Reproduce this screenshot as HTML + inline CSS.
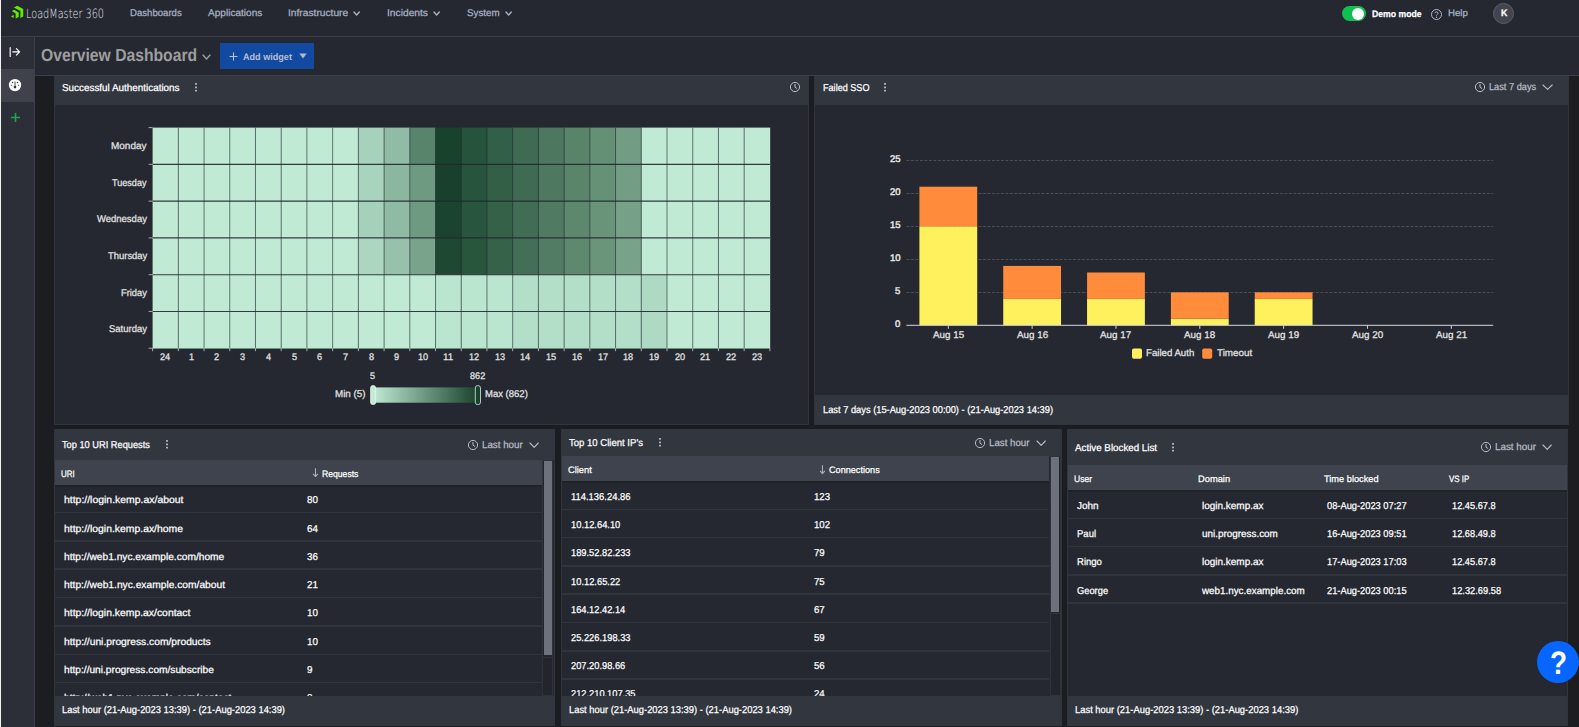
<!DOCTYPE html><html lang="en"><head><meta charset="utf-8"><title>LoadMaster 360 - Overview Dashboard</title>
<style>
html,body{margin:0;padding:0;background:#252831;}
body{width:1579px;height:727px;overflow:hidden;position:relative;font-family:"Liberation Sans", sans-serif;text-rendering:geometricPrecision;}
.b{position:absolute;display:block;}
.t{position:absolute;white-space:nowrap;transform-origin:0 50%;line-height:16px;height:16px;-webkit-text-stroke:0.25px;}
.c{position:absolute;left:0;top:0;width:1579px;overflow:hidden;}
</style></head><body>
<div class="b" style="left:0px;top:0px;width:1579px;height:727px;background:#252831;"></div>
<div class="b" style="left:0px;top:0px;width:1px;height:727px;background:#f2f2f2;"></div>
<div class="b" style="left:1px;top:36px;width:1578px;height:1px;background:#3b3f49;"></div>
<div class="b" style="left:1px;top:37px;width:33px;height:690px;background:#2c2f37;"></div>
<div class="b" style="left:1px;top:69px;width:33px;height:33px;background:#3f424a;"></div>
<div class="b" style="left:34px;top:37px;width:1px;height:690px;background:#3b3f49;"></div>
<div class="b" style="left:35px;top:74.6px;width:1544px;height:1.2px;background:#3b3f49;"></div>
<div class="b" style="left:35px;top:75.8px;width:1544px;height:651.2px;background:#1c1d21;"></div>
<svg class="b" style="left:8px;top:3px" width="18" height="18" viewBox="8 3 18 18">
<path d="M13.9 7.4 L17.2 5.8 L23.2 9.1 L23.2 16.4 L20.4 18.0 L20.4 10.9 Z" fill="#62ec00"/>
<path d="M11.8 11.1 L14.2 9.8 L18.7 12.4 L18.7 16.7 L15.7 18.8 L15.7 13.5 Z" fill="#62ec00"/>
<path d="M13.7 14.7 L11 16.4 L13.7 18 Z" fill="#62ec00"/>
</svg>
<svg class="b" style="left:353.2px;top:10.9px" width="7.3" height="5.0" viewBox="0 0 7.3 5.0"><path d="M1 1 L3.65 4.0 L6.3 1" fill="none" stroke="#a8b2c4" stroke-width="1.4" stroke-linecap="round" stroke-linejoin="round"/></svg>
<svg class="b" style="left:433.3px;top:10.9px" width="7.3" height="5.0" viewBox="0 0 7.3 5.0"><path d="M1 1 L3.65 4.0 L6.3 1" fill="none" stroke="#a8b2c4" stroke-width="1.4" stroke-linecap="round" stroke-linejoin="round"/></svg>
<svg class="b" style="left:504.5px;top:10.9px" width="7.3" height="5.0" viewBox="0 0 7.3 5.0"><path d="M1 1 L3.65 4.0 L6.3 1" fill="none" stroke="#a8b2c4" stroke-width="1.4" stroke-linecap="round" stroke-linejoin="round"/></svg>
<div class="b" style="left:1342px;top:6px;width:24px;height:15px;border-radius:8px;background:#10c050"></div>
<div class="b" style="left:1351.9px;top:7.8px;width:12px;height:12px;border-radius:6px;background:#fff"></div>
<svg class="b" style="left:1429.5px;top:7.5px" width="13" height="13" viewBox="0 0 13 13"><circle cx="6.5" cy="6.5" r="5" fill="none" stroke="#aab6cb" stroke-width="1"/><path d="M4.9 5.2 C4.9 3.4 8.1 3.4 8.1 5.2 C8.1 6.3 6.5 6.3 6.5 7.6" fill="none" stroke="#aab6cb" stroke-width="1"/><circle cx="6.5" cy="9.2" r="0.7" fill="#aab6cb"/></svg>
<div class="b" style="left:1493px;top:3px;width:19.2px;height:19px;border-radius:11px;background:#42454e;border:1px solid #5b5f68"></div>
<svg class="b" style="left:8px;top:45px" width="15" height="14" viewBox="8 45 15 14"><path d="M10.2 47.5 L10.2 56.4 M12.8 51.9 L19.4 51.9 M16.4 48.7 L19.6 51.9 L16.4 55.1" fill="none" stroke="#fff" stroke-width="1.15" stroke-linecap="round" stroke-linejoin="round"/></svg>
<svg class="b" style="left:8px;top:78px" width="14" height="14" viewBox="0 0 14 14"><circle cx="7" cy="7.1" r="6.2" fill="#fff"/><path d="M7 3.4 L7 8" stroke="#85888f" stroke-width="1.5" stroke-linecap="butt"/><circle cx="7" cy="9.1" r="1.35" fill="#2f3239"/><circle cx="3.5" cy="7.2" r="0.75" fill="#6d7078"/><circle cx="10.5" cy="7.2" r="0.75" fill="#6d7078"/><circle cx="4.5" cy="4.6" r="0.75" fill="#3f424a"/><circle cx="9.5" cy="4.6" r="0.75" fill="#3f424a"/></svg>
<svg class="b" style="left:10px;top:112px" width="11" height="11" viewBox="0 0 11 11"><path d="M5.5 1 L5.5 10 M1 5.5 L10 5.5" stroke="#1da44c" stroke-width="1.6" fill="none"/></svg>
<svg class="b" style="left:202px;top:53.5px" width="9" height="6" viewBox="0 0 9 6"><path d="M1 1 L4.5 5 L8 1" fill="none" stroke="#9c9c9c" stroke-width="1.4" stroke-linecap="round" stroke-linejoin="round"/></svg>
<div class="b" style="left:220px;top:43px;width:94px;height:26px;background:#134aa1;"></div>
<svg class="b" style="left:229px;top:52px" width="9" height="9" viewBox="0 0 9 9"><path d="M4.5 0.5 L4.5 8.5 M0.5 4.5 L8.5 4.5" stroke="#b6c0d6" stroke-width="1.1" fill="none"/></svg>
<svg class="b" style="left:298.5px;top:52.5px" width="8" height="6" viewBox="0 0 8 6"><path d="M0.3 0.5 L7.7 0.5 L4 5.6 Z" fill="#b0b8ca"/></svg>
<div class="b" style="left:54px;top:76px;width:755px;height:349px;background:#30343c;"></div>
<div class="b" style="left:55px;top:76px;width:753px;height:348px;background:#252831;"></div>
<div class="b" style="left:55px;top:76px;width:753px;height:29px;background:#32363f;"></div>
<svg class="b" style="left:193.7px;top:81.8px" width="4" height="11" viewBox="0 0 4 11"><rect x="1.1" y="1.0" width="1.8" height="1.8" rx="0.5" fill="#c4c7ce"/><rect x="1.1" y="4.4" width="1.8" height="1.8" rx="0.5" fill="#c4c7ce"/><rect x="1.1" y="7.8" width="1.8" height="1.8" rx="0.5" fill="#c4c7ce"/></svg>
<svg class="b" style="left:788.6px;top:81.3px" width="12" height="12" viewBox="0 0 12 12"><circle cx="6" cy="6" r="4.6" fill="none" stroke="#b7bcc6" stroke-width="1"/><path d="M6 3.3 L6 6.2 L7.8 7.4" fill="none" stroke="#b7bcc6" stroke-width="1" stroke-linecap="round"/></svg>
<div class="b" style="left:814px;top:76px;width:755px;height:349px;background:#30343c;"></div>
<div class="b" style="left:815px;top:76px;width:753px;height:348px;background:#252831;"></div>
<div class="b" style="left:815px;top:76px;width:753px;height:29px;background:#32363f;"></div>
<div class="b" style="left:815px;top:395px;width:753px;height:29px;background:#32363f;"></div>
<svg class="b" style="left:883px;top:81.8px" width="4" height="11" viewBox="0 0 4 11"><rect x="1.1" y="1.0" width="1.8" height="1.8" rx="0.5" fill="#c4c7ce"/><rect x="1.1" y="4.4" width="1.8" height="1.8" rx="0.5" fill="#c4c7ce"/><rect x="1.1" y="7.8" width="1.8" height="1.8" rx="0.5" fill="#c4c7ce"/></svg>
<svg class="b" style="left:1473.8px;top:81.2px" width="12" height="12" viewBox="0 0 12 12"><circle cx="6" cy="6" r="4.6" fill="none" stroke="#b7bcc6" stroke-width="1"/><path d="M6 3.3 L6 6.2 L7.8 7.4" fill="none" stroke="#b7bcc6" stroke-width="1" stroke-linecap="round"/></svg>
<svg class="b" style="left:1542.2px;top:84.2px" width="11.200000000000045" height="7" viewBox="0 0 11.200000000000045 7"><path d="M1 1 L5.600000000000023 5.4 L10.200000000000045 1" fill="none" stroke="#b7bcc6" stroke-width="1.1" stroke-linecap="round" stroke-linejoin="round"/></svg>
<div class="b" style="left:54px;top:429px;width:501px;height:297px;background:#30343c;"></div>
<div class="b" style="left:55px;top:429px;width:499px;height:296px;background:#252831;"></div>
<div class="b" style="left:55px;top:429px;width:499px;height:31px;background:#32363f;"></div>
<div class="b" style="left:55px;top:696px;width:499px;height:29px;background:#32363f;"></div>
<div class="b" style="left:560.6px;top:429px;width:501.4px;height:297px;background:#30343c;"></div>
<div class="b" style="left:561.6px;top:429px;width:499.4px;height:296px;background:#252831;"></div>
<div class="b" style="left:561.6px;top:429px;width:499.4px;height:27px;background:#32363f;"></div>
<div class="b" style="left:561.6px;top:696px;width:499.4px;height:29px;background:#32363f;"></div>
<div class="b" style="left:1067px;top:429px;width:501px;height:297px;background:#30343c;"></div>
<div class="b" style="left:1068px;top:429px;width:499px;height:296px;background:#252831;"></div>
<div class="b" style="left:1068px;top:429px;width:499px;height:36px;background:#32363f;"></div>
<div class="b" style="left:1068px;top:696px;width:499px;height:29px;background:#32363f;"></div>
<svg class="b" style="left:164.7px;top:439.3px" width="4" height="11" viewBox="0 0 4 11"><rect x="1.1" y="1.0" width="1.8" height="1.8" rx="0.5" fill="#c4c7ce"/><rect x="1.1" y="4.4" width="1.8" height="1.8" rx="0.5" fill="#c4c7ce"/><rect x="1.1" y="7.8" width="1.8" height="1.8" rx="0.5" fill="#c4c7ce"/></svg>
<svg class="b" style="left:467.3px;top:438.8px" width="12" height="12" viewBox="0 0 12 12"><circle cx="6" cy="6" r="4.6" fill="none" stroke="#b7bcc6" stroke-width="1"/><path d="M6 3.3 L6 6.2 L7.8 7.4" fill="none" stroke="#b7bcc6" stroke-width="1" stroke-linecap="round"/></svg>
<svg class="b" style="left:529px;top:441.8px" width="10.299999999999955" height="7" viewBox="0 0 10.299999999999955 7"><path d="M1 1 L5.149999999999977 5.4 L9.299999999999955 1" fill="none" stroke="#b7bcc6" stroke-width="1.1" stroke-linecap="round" stroke-linejoin="round"/></svg>
<svg class="b" style="left:657.7px;top:437.3px" width="4" height="11" viewBox="0 0 4 11"><rect x="1.1" y="1.0" width="1.8" height="1.8" rx="0.5" fill="#c4c7ce"/><rect x="1.1" y="4.4" width="1.8" height="1.8" rx="0.5" fill="#c4c7ce"/><rect x="1.1" y="7.8" width="1.8" height="1.8" rx="0.5" fill="#c4c7ce"/></svg>
<svg class="b" style="left:974.1px;top:436.8px" width="12" height="12" viewBox="0 0 12 12"><circle cx="6" cy="6" r="4.6" fill="none" stroke="#b7bcc6" stroke-width="1"/><path d="M6 3.3 L6 6.2 L7.8 7.4" fill="none" stroke="#b7bcc6" stroke-width="1" stroke-linecap="round"/></svg>
<svg class="b" style="left:1035.6px;top:439.8px" width="10.400000000000091" height="7" viewBox="0 0 10.400000000000091 7"><path d="M1 1 L5.2000000000000455 5.4 L9.400000000000091 1" fill="none" stroke="#b7bcc6" stroke-width="1.1" stroke-linecap="round" stroke-linejoin="round"/></svg>
<svg class="b" style="left:1170.7px;top:441.9px" width="4" height="11" viewBox="0 0 4 11"><rect x="1.1" y="1.0" width="1.8" height="1.8" rx="0.5" fill="#c4c7ce"/><rect x="1.1" y="4.4" width="1.8" height="1.8" rx="0.5" fill="#c4c7ce"/><rect x="1.1" y="7.8" width="1.8" height="1.8" rx="0.5" fill="#c4c7ce"/></svg>
<svg class="b" style="left:1480.3px;top:440.7px" width="12" height="12" viewBox="0 0 12 12"><circle cx="6" cy="6" r="4.6" fill="none" stroke="#b7bcc6" stroke-width="1"/><path d="M6 3.3 L6 6.2 L7.8 7.4" fill="none" stroke="#b7bcc6" stroke-width="1" stroke-linecap="round"/></svg>
<svg class="b" style="left:1542.2px;top:443.7px" width="10.299999999999955" height="7" viewBox="0 0 10.299999999999955 7"><path d="M1 1 L5.149999999999977 5.4 L9.299999999999955 1" fill="none" stroke="#b7bcc6" stroke-width="1.1" stroke-linecap="round" stroke-linejoin="round"/></svg>
<div class="b" style="left:55px;top:460px;width:487px;height:25.19999999999999px;background:#3e434d;"></div>
<div class="b" style="left:55px;top:485.2px;width:487px;height:1.6px;background:#202229;"></div>
<div class="b" style="left:55px;top:511.7px;width:487px;height:1.6px;background:#30343c;"></div>
<div class="b" style="left:55px;top:540.1px;width:487px;height:1.6px;background:#30343c;"></div>
<div class="b" style="left:55px;top:568.4000000000001px;width:487px;height:1.6px;background:#30343c;"></div>
<div class="b" style="left:55px;top:596.8000000000001px;width:487px;height:1.6px;background:#30343c;"></div>
<div class="b" style="left:55px;top:625.1px;width:487px;height:1.6px;background:#30343c;"></div>
<div class="b" style="left:55px;top:653.5px;width:487px;height:1.6px;background:#30343c;"></div>
<div class="b" style="left:55px;top:681.8000000000001px;width:487px;height:1.6px;background:#30343c;"></div>
<div class="b" style="left:542.4px;top:460px;width:11.100000000000023px;height:236px;background:#23252c;box-shadow:inset 0 0 0 1px #2f323a;"></div>
<div class="b" style="left:543.9px;top:461.4px;width:8.100000000000023px;height:194.10000000000002px;background:#6c717c;"></div>
<div class="b" style="left:542.4px;top:657.0px;width:11.100000000000023px;height:1px;background:#30333b;"></div>
<svg class="b" style="left:311.8px;top:467.8px" width="7" height="10" viewBox="0 0 7 10"><path d="M3.5 0.3 L3.5 8.4 M1.1 5.9 L3.5 8.6 L5.9 5.9" fill="none" stroke="#a9aebb" stroke-width="1.1" stroke-linejoin="round"/></svg>
<div class="b" style="left:561.6px;top:456px;width:487.69999999999993px;height:25px;background:#3e434d;"></div>
<div class="b" style="left:561.6px;top:481px;width:487.69999999999993px;height:1.6px;background:#202229;"></div>
<div class="b" style="left:561.6px;top:508.5px;width:487.69999999999993px;height:1.6px;background:#30343c;"></div>
<div class="b" style="left:561.6px;top:536.8000000000001px;width:487.69999999999993px;height:1.6px;background:#30343c;"></div>
<div class="b" style="left:561.6px;top:565.1px;width:487.69999999999993px;height:1.6px;background:#30343c;"></div>
<div class="b" style="left:561.6px;top:593.4000000000001px;width:487.69999999999993px;height:1.6px;background:#30343c;"></div>
<div class="b" style="left:561.6px;top:621.7px;width:487.69999999999993px;height:1.6px;background:#30343c;"></div>
<div class="b" style="left:561.6px;top:650.0px;width:487.69999999999993px;height:1.6px;background:#30343c;"></div>
<div class="b" style="left:561.6px;top:678.3000000000001px;width:487.69999999999993px;height:1.6px;background:#30343c;"></div>
<div class="b" style="left:1049.6px;top:456px;width:11.100000000000136px;height:240px;background:#23252c;box-shadow:inset 0 0 0 1px #2f323a;"></div>
<div class="b" style="left:1051.1px;top:457.4px;width:8.100000000000136px;height:154.30000000000007px;background:#6c717c;"></div>
<div class="b" style="left:1049.6px;top:613.2px;width:11.100000000000136px;height:1px;background:#30333b;"></div>
<svg class="b" style="left:818.5px;top:464.6px" width="7" height="10" viewBox="0 0 7 10"><path d="M3.5 0.3 L3.5 8.4 M1.1 5.9 L3.5 8.6 L5.9 5.9" fill="none" stroke="#a9aebb" stroke-width="1.1" stroke-linejoin="round"/></svg>
<div class="b" style="left:1068px;top:465px;width:499px;height:25px;background:#3e434d;"></div>
<div class="b" style="left:1068px;top:490px;width:499px;height:1.6px;background:#202229;"></div>
<div class="b" style="left:1068px;top:517.5px;width:499px;height:1.6px;background:#30343c;"></div>
<div class="b" style="left:1068px;top:545.8000000000001px;width:499px;height:1.6px;background:#30343c;"></div>
<div class="b" style="left:1068px;top:574.0px;width:499px;height:1.6px;background:#30343c;"></div>
<div class="b" style="left:1068px;top:602.2px;width:499px;height:1.6px;background:#30343c;"></div>
<div class="b" style="left:1537px;top:640.6px;width:42px;height:42px;border-radius:21px;background:#0666ff"></div>
<svg class="b" style="left:0;top:0" width="1579" height="440" viewBox="0 0 1579 440"><rect x="152.60" y="127.60" width="26.02" height="37.07" fill="#c0ead3"/><rect x="178.32" y="127.60" width="26.02" height="37.07" fill="#c0ead3"/><rect x="204.04" y="127.60" width="26.02" height="37.07" fill="#c0ead3"/><rect x="229.76" y="127.60" width="26.02" height="37.07" fill="#c0ead3"/><rect x="255.48" y="127.60" width="26.02" height="37.07" fill="#c0ead3"/><rect x="281.20" y="127.60" width="26.02" height="37.07" fill="#c0ead3"/><rect x="306.92" y="127.60" width="26.02" height="37.07" fill="#c0ead3"/><rect x="332.64" y="127.60" width="26.02" height="37.07" fill="#c0ead3"/><rect x="358.36" y="127.60" width="26.02" height="37.07" fill="#a6d1ba"/><rect x="384.08" y="127.60" width="26.02" height="37.07" fill="#90bba4"/><rect x="409.80" y="127.60" width="26.02" height="37.07" fill="#58846b"/><rect x="435.52" y="127.60" width="26.02" height="37.07" fill="#19422d"/><rect x="461.24" y="127.60" width="26.02" height="37.07" fill="#25533b"/><rect x="486.96" y="127.60" width="26.02" height="37.07" fill="#325f47"/><rect x="512.68" y="127.60" width="26.02" height="37.07" fill="#3f6b52"/><rect x="538.40" y="127.60" width="26.02" height="37.07" fill="#4d785f"/><rect x="564.12" y="127.60" width="26.02" height="37.07" fill="#59846a"/><rect x="589.84" y="127.60" width="26.02" height="37.07" fill="#649075"/><rect x="615.56" y="127.60" width="26.02" height="37.07" fill="#729d84"/><rect x="641.28" y="127.60" width="26.02" height="37.07" fill="#c0ead3"/><rect x="667.00" y="127.60" width="26.02" height="37.07" fill="#c0ead3"/><rect x="692.72" y="127.60" width="26.02" height="37.07" fill="#c0ead3"/><rect x="718.44" y="127.60" width="26.02" height="37.07" fill="#c0ead3"/><rect x="744.16" y="127.60" width="26.02" height="37.07" fill="#c0ead3"/><rect x="152.60" y="164.37" width="26.02" height="37.07" fill="#c0ead3"/><rect x="178.32" y="164.37" width="26.02" height="37.07" fill="#c0ead3"/><rect x="204.04" y="164.37" width="26.02" height="37.07" fill="#c0ead3"/><rect x="229.76" y="164.37" width="26.02" height="37.07" fill="#c0ead3"/><rect x="255.48" y="164.37" width="26.02" height="37.07" fill="#c0ead3"/><rect x="281.20" y="164.37" width="26.02" height="37.07" fill="#c0ead3"/><rect x="306.92" y="164.37" width="26.02" height="37.07" fill="#c0ead3"/><rect x="332.64" y="164.37" width="26.02" height="37.07" fill="#c0ead3"/><rect x="358.36" y="164.37" width="26.02" height="37.07" fill="#a8d3bc"/><rect x="384.08" y="164.37" width="26.02" height="37.07" fill="#8cb79f"/><rect x="409.80" y="164.37" width="26.02" height="37.07" fill="#6f9a82"/><rect x="435.52" y="164.37" width="26.02" height="37.07" fill="#18402c"/><rect x="461.24" y="164.37" width="26.02" height="37.07" fill="#26543c"/><rect x="486.96" y="164.37" width="26.02" height="37.07" fill="#335f47"/><rect x="512.68" y="164.37" width="26.02" height="37.07" fill="#3f6b52"/><rect x="538.40" y="164.37" width="26.02" height="37.07" fill="#4e7960"/><rect x="564.12" y="164.37" width="26.02" height="37.07" fill="#5a856b"/><rect x="589.84" y="164.37" width="26.02" height="37.07" fill="#659176"/><rect x="615.56" y="164.37" width="26.02" height="37.07" fill="#739e85"/><rect x="641.28" y="164.37" width="26.02" height="37.07" fill="#c0ead3"/><rect x="667.00" y="164.37" width="26.02" height="37.07" fill="#c0ead3"/><rect x="692.72" y="164.37" width="26.02" height="37.07" fill="#c0ead3"/><rect x="718.44" y="164.37" width="26.02" height="37.07" fill="#c0ead3"/><rect x="744.16" y="164.37" width="26.02" height="37.07" fill="#c0ead3"/><rect x="152.60" y="201.14" width="26.02" height="37.07" fill="#c0ead3"/><rect x="178.32" y="201.14" width="26.02" height="37.07" fill="#c0ead3"/><rect x="204.04" y="201.14" width="26.02" height="37.07" fill="#c0ead3"/><rect x="229.76" y="201.14" width="26.02" height="37.07" fill="#c0ead3"/><rect x="255.48" y="201.14" width="26.02" height="37.07" fill="#c0ead3"/><rect x="281.20" y="201.14" width="26.02" height="37.07" fill="#c0ead3"/><rect x="306.92" y="201.14" width="26.02" height="37.07" fill="#c0ead3"/><rect x="332.64" y="201.14" width="26.02" height="37.07" fill="#c0ead3"/><rect x="358.36" y="201.14" width="26.02" height="37.07" fill="#a5d0b9"/><rect x="384.08" y="201.14" width="26.02" height="37.07" fill="#8fbaa3"/><rect x="409.80" y="201.14" width="26.02" height="37.07" fill="#6f9a82"/><rect x="435.52" y="201.14" width="26.02" height="37.07" fill="#1a442f"/><rect x="461.24" y="201.14" width="26.02" height="37.07" fill="#27553d"/><rect x="486.96" y="201.14" width="26.02" height="37.07" fill="#346148"/><rect x="512.68" y="201.14" width="26.02" height="37.07" fill="#416d54"/><rect x="538.40" y="201.14" width="26.02" height="37.07" fill="#507b62"/><rect x="564.12" y="201.14" width="26.02" height="37.07" fill="#5d886e"/><rect x="589.84" y="201.14" width="26.02" height="37.07" fill="#69947a"/><rect x="615.56" y="201.14" width="26.02" height="37.07" fill="#76a188"/><rect x="641.28" y="201.14" width="26.02" height="37.07" fill="#c0ead3"/><rect x="667.00" y="201.14" width="26.02" height="37.07" fill="#c0ead3"/><rect x="692.72" y="201.14" width="26.02" height="37.07" fill="#c0ead3"/><rect x="718.44" y="201.14" width="26.02" height="37.07" fill="#c0ead3"/><rect x="744.16" y="201.14" width="26.02" height="37.07" fill="#c0ead3"/><rect x="152.60" y="237.91" width="26.02" height="37.07" fill="#c0ead3"/><rect x="178.32" y="237.91" width="26.02" height="37.07" fill="#c0ead3"/><rect x="204.04" y="237.91" width="26.02" height="37.07" fill="#c0ead3"/><rect x="229.76" y="237.91" width="26.02" height="37.07" fill="#c0ead3"/><rect x="255.48" y="237.91" width="26.02" height="37.07" fill="#c0ead3"/><rect x="281.20" y="237.91" width="26.02" height="37.07" fill="#c0ead3"/><rect x="306.92" y="237.91" width="26.02" height="37.07" fill="#c0ead3"/><rect x="332.64" y="237.91" width="26.02" height="37.07" fill="#c0ead3"/><rect x="358.36" y="237.91" width="26.02" height="37.07" fill="#acd6bf"/><rect x="384.08" y="237.91" width="26.02" height="37.07" fill="#97c1aa"/><rect x="409.80" y="237.91" width="26.02" height="37.07" fill="#79a38b"/><rect x="435.52" y="237.91" width="26.02" height="37.07" fill="#1e4831"/><rect x="461.24" y="237.91" width="26.02" height="37.07" fill="#28563d"/><rect x="486.96" y="237.91" width="26.02" height="37.07" fill="#356249"/><rect x="512.68" y="237.91" width="26.02" height="37.07" fill="#436f56"/><rect x="538.40" y="237.91" width="26.02" height="37.07" fill="#527d64"/><rect x="564.12" y="237.91" width="26.02" height="37.07" fill="#5e896f"/><rect x="589.84" y="237.91" width="26.02" height="37.07" fill="#6a957b"/><rect x="615.56" y="237.91" width="26.02" height="37.07" fill="#78a38a"/><rect x="641.28" y="237.91" width="26.02" height="37.07" fill="#c0ead3"/><rect x="667.00" y="237.91" width="26.02" height="37.07" fill="#c0ead3"/><rect x="692.72" y="237.91" width="26.02" height="37.07" fill="#c0ead3"/><rect x="718.44" y="237.91" width="26.02" height="37.07" fill="#c0ead3"/><rect x="744.16" y="237.91" width="26.02" height="37.07" fill="#c0ead3"/><rect x="152.60" y="274.68" width="26.02" height="37.07" fill="#c0ead3"/><rect x="178.32" y="274.68" width="26.02" height="37.07" fill="#c0ead3"/><rect x="204.04" y="274.68" width="26.02" height="37.07" fill="#c0ead3"/><rect x="229.76" y="274.68" width="26.02" height="37.07" fill="#c0ead3"/><rect x="255.48" y="274.68" width="26.02" height="37.07" fill="#c0ead3"/><rect x="281.20" y="274.68" width="26.02" height="37.07" fill="#c0ead3"/><rect x="306.92" y="274.68" width="26.02" height="37.07" fill="#c0ead3"/><rect x="332.64" y="274.68" width="26.02" height="37.07" fill="#c0ead3"/><rect x="358.36" y="274.68" width="26.02" height="37.07" fill="#c0ead3"/><rect x="384.08" y="274.68" width="26.02" height="37.07" fill="#c0ead3"/><rect x="409.80" y="274.68" width="26.02" height="37.07" fill="#c0ead3"/><rect x="435.52" y="274.68" width="26.02" height="37.07" fill="#bae5ce"/><rect x="461.24" y="274.68" width="26.02" height="37.07" fill="#bae5ce"/><rect x="486.96" y="274.68" width="26.02" height="37.07" fill="#bae5ce"/><rect x="512.68" y="274.68" width="26.02" height="37.07" fill="#b3dec7"/><rect x="538.40" y="274.68" width="26.02" height="37.07" fill="#b3dec7"/><rect x="564.12" y="274.68" width="26.02" height="37.07" fill="#b3dec7"/><rect x="589.84" y="274.68" width="26.02" height="37.07" fill="#b3dec7"/><rect x="615.56" y="274.68" width="26.02" height="37.07" fill="#b3dec7"/><rect x="641.28" y="274.68" width="26.02" height="37.07" fill="#aed9c2"/><rect x="667.00" y="274.68" width="26.02" height="37.07" fill="#c0ead3"/><rect x="692.72" y="274.68" width="26.02" height="37.07" fill="#c0ead3"/><rect x="718.44" y="274.68" width="26.02" height="37.07" fill="#c0ead3"/><rect x="744.16" y="274.68" width="26.02" height="37.07" fill="#c0ead3"/><rect x="152.60" y="311.45" width="26.02" height="37.07" fill="#c0ead3"/><rect x="178.32" y="311.45" width="26.02" height="37.07" fill="#c0ead3"/><rect x="204.04" y="311.45" width="26.02" height="37.07" fill="#c0ead3"/><rect x="229.76" y="311.45" width="26.02" height="37.07" fill="#c0ead3"/><rect x="255.48" y="311.45" width="26.02" height="37.07" fill="#c0ead3"/><rect x="281.20" y="311.45" width="26.02" height="37.07" fill="#c0ead3"/><rect x="306.92" y="311.45" width="26.02" height="37.07" fill="#c0ead3"/><rect x="332.64" y="311.45" width="26.02" height="37.07" fill="#c0ead3"/><rect x="358.36" y="311.45" width="26.02" height="37.07" fill="#c0ead3"/><rect x="384.08" y="311.45" width="26.02" height="37.07" fill="#c0ead3"/><rect x="409.80" y="311.45" width="26.02" height="37.07" fill="#c0ead3"/><rect x="435.52" y="311.45" width="26.02" height="37.07" fill="#bae5ce"/><rect x="461.24" y="311.45" width="26.02" height="37.07" fill="#bae5ce"/><rect x="486.96" y="311.45" width="26.02" height="37.07" fill="#bae5ce"/><rect x="512.68" y="311.45" width="26.02" height="37.07" fill="#b3dec7"/><rect x="538.40" y="311.45" width="26.02" height="37.07" fill="#b3dec7"/><rect x="564.12" y="311.45" width="26.02" height="37.07" fill="#b3dec7"/><rect x="589.84" y="311.45" width="26.02" height="37.07" fill="#b3dec7"/><rect x="615.56" y="311.45" width="26.02" height="37.07" fill="#b3dec7"/><rect x="641.28" y="311.45" width="26.02" height="37.07" fill="#aed9c2"/><rect x="667.00" y="311.45" width="26.02" height="37.07" fill="#c0ead3"/><rect x="692.72" y="311.45" width="26.02" height="37.07" fill="#c0ead3"/><rect x="718.44" y="311.45" width="26.02" height="37.07" fill="#c0ead3"/><rect x="744.16" y="311.45" width="26.02" height="37.07" fill="#c0ead3"/><line x1="178.32" y1="127.6" x2="178.32" y2="348.22" stroke="#252831" stroke-width="1" stroke-opacity="0.6"/><line x1="204.04" y1="127.6" x2="204.04" y2="348.22" stroke="#252831" stroke-width="1" stroke-opacity="0.6"/><line x1="229.76" y1="127.6" x2="229.76" y2="348.22" stroke="#252831" stroke-width="1" stroke-opacity="0.6"/><line x1="255.48" y1="127.6" x2="255.48" y2="348.22" stroke="#252831" stroke-width="1" stroke-opacity="0.6"/><line x1="281.20" y1="127.6" x2="281.20" y2="348.22" stroke="#252831" stroke-width="1" stroke-opacity="0.6"/><line x1="306.92" y1="127.6" x2="306.92" y2="348.22" stroke="#252831" stroke-width="1" stroke-opacity="0.6"/><line x1="332.64" y1="127.6" x2="332.64" y2="348.22" stroke="#252831" stroke-width="1" stroke-opacity="0.6"/><line x1="358.36" y1="127.6" x2="358.36" y2="348.22" stroke="#252831" stroke-width="1" stroke-opacity="0.6"/><line x1="384.08" y1="127.6" x2="384.08" y2="348.22" stroke="#252831" stroke-width="1" stroke-opacity="0.6"/><line x1="409.80" y1="127.6" x2="409.80" y2="348.22" stroke="#252831" stroke-width="1" stroke-opacity="0.6"/><line x1="435.52" y1="127.6" x2="435.52" y2="348.22" stroke="#252831" stroke-width="1" stroke-opacity="0.6"/><line x1="461.24" y1="127.6" x2="461.24" y2="348.22" stroke="#252831" stroke-width="1" stroke-opacity="0.6"/><line x1="486.96" y1="127.6" x2="486.96" y2="348.22" stroke="#252831" stroke-width="1" stroke-opacity="0.6"/><line x1="512.68" y1="127.6" x2="512.68" y2="348.22" stroke="#252831" stroke-width="1" stroke-opacity="0.6"/><line x1="538.40" y1="127.6" x2="538.40" y2="348.22" stroke="#252831" stroke-width="1" stroke-opacity="0.6"/><line x1="564.12" y1="127.6" x2="564.12" y2="348.22" stroke="#252831" stroke-width="1" stroke-opacity="0.6"/><line x1="589.84" y1="127.6" x2="589.84" y2="348.22" stroke="#252831" stroke-width="1" stroke-opacity="0.6"/><line x1="615.56" y1="127.6" x2="615.56" y2="348.22" stroke="#252831" stroke-width="1" stroke-opacity="0.6"/><line x1="641.28" y1="127.6" x2="641.28" y2="348.22" stroke="#252831" stroke-width="1" stroke-opacity="0.6"/><line x1="667.00" y1="127.6" x2="667.00" y2="348.22" stroke="#252831" stroke-width="1" stroke-opacity="0.6"/><line x1="692.72" y1="127.6" x2="692.72" y2="348.22" stroke="#252831" stroke-width="1" stroke-opacity="0.6"/><line x1="718.44" y1="127.6" x2="718.44" y2="348.22" stroke="#252831" stroke-width="1" stroke-opacity="0.6"/><line x1="744.16" y1="127.6" x2="744.16" y2="348.22" stroke="#252831" stroke-width="1" stroke-opacity="0.6"/><line x1="152.6" y1="164.37" x2="769.88" y2="164.37" stroke="#252831" stroke-width="1.1" stroke-opacity="0.9"/><line x1="152.6" y1="201.14" x2="769.88" y2="201.14" stroke="#252831" stroke-width="1.1" stroke-opacity="0.9"/><line x1="152.6" y1="237.91" x2="769.88" y2="237.91" stroke="#252831" stroke-width="1.1" stroke-opacity="0.9"/><line x1="152.6" y1="274.68" x2="769.88" y2="274.68" stroke="#252831" stroke-width="1.1" stroke-opacity="0.9"/><line x1="152.6" y1="311.45" x2="769.88" y2="311.45" stroke="#252831" stroke-width="1.1" stroke-opacity="0.9"/><line x1="148.6" y1="127.60" x2="152.6" y2="127.60" stroke="#c9ccd3" stroke-width="0.8"/><line x1="148.6" y1="164.37" x2="152.6" y2="164.37" stroke="#c9ccd3" stroke-width="0.8"/><line x1="148.6" y1="201.14" x2="152.6" y2="201.14" stroke="#c9ccd3" stroke-width="0.8"/><line x1="148.6" y1="237.91" x2="152.6" y2="237.91" stroke="#c9ccd3" stroke-width="0.8"/><line x1="148.6" y1="274.68" x2="152.6" y2="274.68" stroke="#c9ccd3" stroke-width="0.8"/><line x1="148.6" y1="311.45" x2="152.6" y2="311.45" stroke="#c9ccd3" stroke-width="0.8"/><line x1="148.6" y1="348.22" x2="152.6" y2="348.22" stroke="#c9ccd3" stroke-width="0.8"/><line x1="152.60" y1="348.22" x2="152.60" y2="351.22" stroke="#c9ccd3" stroke-width="0.8"/><line x1="178.32" y1="348.22" x2="178.32" y2="351.22" stroke="#c9ccd3" stroke-width="0.8"/><line x1="204.04" y1="348.22" x2="204.04" y2="351.22" stroke="#c9ccd3" stroke-width="0.8"/><line x1="229.76" y1="348.22" x2="229.76" y2="351.22" stroke="#c9ccd3" stroke-width="0.8"/><line x1="255.48" y1="348.22" x2="255.48" y2="351.22" stroke="#c9ccd3" stroke-width="0.8"/><line x1="281.20" y1="348.22" x2="281.20" y2="351.22" stroke="#c9ccd3" stroke-width="0.8"/><line x1="306.92" y1="348.22" x2="306.92" y2="351.22" stroke="#c9ccd3" stroke-width="0.8"/><line x1="332.64" y1="348.22" x2="332.64" y2="351.22" stroke="#c9ccd3" stroke-width="0.8"/><line x1="358.36" y1="348.22" x2="358.36" y2="351.22" stroke="#c9ccd3" stroke-width="0.8"/><line x1="384.08" y1="348.22" x2="384.08" y2="351.22" stroke="#c9ccd3" stroke-width="0.8"/><line x1="409.80" y1="348.22" x2="409.80" y2="351.22" stroke="#c9ccd3" stroke-width="0.8"/><line x1="435.52" y1="348.22" x2="435.52" y2="351.22" stroke="#c9ccd3" stroke-width="0.8"/><line x1="461.24" y1="348.22" x2="461.24" y2="351.22" stroke="#c9ccd3" stroke-width="0.8"/><line x1="486.96" y1="348.22" x2="486.96" y2="351.22" stroke="#c9ccd3" stroke-width="0.8"/><line x1="512.68" y1="348.22" x2="512.68" y2="351.22" stroke="#c9ccd3" stroke-width="0.8"/><line x1="538.40" y1="348.22" x2="538.40" y2="351.22" stroke="#c9ccd3" stroke-width="0.8"/><line x1="564.12" y1="348.22" x2="564.12" y2="351.22" stroke="#c9ccd3" stroke-width="0.8"/><line x1="589.84" y1="348.22" x2="589.84" y2="351.22" stroke="#c9ccd3" stroke-width="0.8"/><line x1="615.56" y1="348.22" x2="615.56" y2="351.22" stroke="#c9ccd3" stroke-width="0.8"/><line x1="641.28" y1="348.22" x2="641.28" y2="351.22" stroke="#c9ccd3" stroke-width="0.8"/><line x1="667.00" y1="348.22" x2="667.00" y2="351.22" stroke="#c9ccd3" stroke-width="0.8"/><line x1="692.72" y1="348.22" x2="692.72" y2="351.22" stroke="#c9ccd3" stroke-width="0.8"/><line x1="718.44" y1="348.22" x2="718.44" y2="351.22" stroke="#c9ccd3" stroke-width="0.8"/><line x1="744.16" y1="348.22" x2="744.16" y2="351.22" stroke="#c9ccd3" stroke-width="0.8"/><line x1="769.88" y1="348.22" x2="769.88" y2="351.22" stroke="#c9ccd3" stroke-width="0.8"/><defs><linearGradient id="lg" x1="0" x2="1" y1="0" y2="0"><stop offset="0" stop-color="#c0ead3"/><stop offset="1" stop-color="#19422d"/></linearGradient></defs><rect x="373" y="387.4" width="105" height="15.3" fill="url(#lg)"/><rect x="370.6" y="385.6" width="5" height="19" rx="2.3" fill="#c3ebd6" stroke="#e6f5ec" stroke-width="0.8"/><rect x="475.3" y="385.6" width="5.2" height="19" rx="2.3" fill="#19422d" stroke="#c9d9d0" stroke-width="0.9"/></svg>
<svg class="b" style="left:0;top:0" width="1579" height="440" viewBox="0 0 1579 440"><line x1="906.4" y1="292.5" x2="1493.2" y2="292.5" stroke="#4a4e57" stroke-width="1" stroke-dasharray="3 1.5"/><line x1="906.4" y1="259.5" x2="1493.2" y2="259.5" stroke="#4a4e57" stroke-width="1" stroke-dasharray="3 1.5"/><line x1="906.4" y1="226.5" x2="1493.2" y2="226.5" stroke="#4a4e57" stroke-width="1" stroke-dasharray="3 1.5"/><line x1="906.4" y1="193.5" x2="1493.2" y2="193.5" stroke="#4a4e57" stroke-width="1" stroke-dasharray="3 1.5"/><line x1="906.4" y1="160.5" x2="1493.2" y2="160.5" stroke="#4a4e57" stroke-width="1" stroke-dasharray="3 1.5"/><rect x="919.41" y="226.30" width="57.8" height="99.00" fill="#fff05e"/><rect x="919.41" y="186.70" width="57.8" height="39.60" fill="#ff8b3b"/><rect x="1003.24" y="298.90" width="57.8" height="26.40" fill="#fff05e"/><rect x="1003.24" y="265.90" width="57.8" height="33.00" fill="#ff8b3b"/><rect x="1087.07" y="298.90" width="57.8" height="26.40" fill="#fff05e"/><rect x="1087.07" y="272.50" width="57.8" height="26.40" fill="#ff8b3b"/><rect x="1170.90" y="318.70" width="57.8" height="6.60" fill="#fff05e"/><rect x="1170.90" y="292.30" width="57.8" height="26.40" fill="#ff8b3b"/><rect x="1254.73" y="298.90" width="57.8" height="26.40" fill="#fff05e"/><rect x="1254.73" y="292.30" width="57.8" height="6.60" fill="#ff8b3b"/><line x1="906.4" y1="325.3" x2="1493.2" y2="325.3" stroke="#d4d6db" stroke-width="1"/><line x1="948.31" y1="325.3" x2="948.31" y2="328.8" stroke="#d4d6db" stroke-width="1"/><line x1="1032.14" y1="325.3" x2="1032.14" y2="328.8" stroke="#d4d6db" stroke-width="1"/><line x1="1115.97" y1="325.3" x2="1115.97" y2="328.8" stroke="#d4d6db" stroke-width="1"/><line x1="1199.80" y1="325.3" x2="1199.80" y2="328.8" stroke="#d4d6db" stroke-width="1"/><line x1="1283.63" y1="325.3" x2="1283.63" y2="328.8" stroke="#d4d6db" stroke-width="1"/><line x1="1367.46" y1="325.3" x2="1367.46" y2="328.8" stroke="#d4d6db" stroke-width="1"/><line x1="1451.29" y1="325.3" x2="1451.29" y2="328.8" stroke="#d4d6db" stroke-width="1"/><rect x="1132" y="348.5" width="10" height="10.3" rx="1.8" fill="#fff05e"/><rect x="1202.2" y="348.5" width="10" height="10.3" rx="1.8" fill="#ff8b3b"/></svg>
<span class="t" style="left:26.00px;top:7px;font-size:12.8px;color:#e3e6ec;font-weight:200;-webkit-text-stroke:0;font-family:'DejaVu Sans Light','DejaVu Sans','Liberation Sans',sans-serif;transform:scaleX(0.7580);">LoadMaster 360</span>
<span class="t" style="left:129.60px;top:6px;font-size:9.8px;color:#a8b2c4;transform:scaleX(0.9786);">Dashboards</span>
<span class="t" style="left:207.60px;top:6px;font-size:9.8px;color:#a8b2c4;transform:scaleX(1.0279);">Applications</span>
<span class="t" style="left:287.80px;top:6px;font-size:9.8px;color:#a8b2c4;transform:scaleX(1.0430);">Infrastructure</span>
<span class="t" style="left:387.00px;top:6px;font-size:9.8px;color:#a8b2c4;transform:scaleX(1.0454);">Incidents</span>
<span class="t" style="left:467.00px;top:6px;font-size:9.8px;color:#a8b2c4;transform:scaleX(0.9978);">System</span>
<span class="t" style="left:1372.30px;top:6px;font-size:9.3px;color:#ffffff;font-weight:700;transform:scaleX(0.9320);">Demo mode</span>
<span class="t" style="left:1447.80px;top:5px;font-size:9.4px;color:#a8b2c4;transform:scaleX(1.0321);">Help</span>
<span class="t" style="left:1500.60px;top:5px;font-size:9.3px;color:#fff;font-weight:700;transform:scaleX(0.9526);">K</span>
<span class="t" style="left:40.50px;top:47px;font-size:17.6px;color:#9e9e9e;font-weight:700;-webkit-text-stroke:0;transform:scaleX(0.8918);">Overview Dashboard</span>
<span class="t" style="left:242.90px;top:49px;font-size:9.3px;color:#b6c0d6;font-weight:700;-webkit-text-stroke:0;transform:scaleX(0.9762);">Add widget</span>
<span class="t" style="left:62.00px;top:81px;font-size:10.0px;color:#fff;transform:scaleX(0.9877);">Successful Authentications</span>
<span class="t" style="left:822.50px;top:81px;font-size:10.0px;color:#fff;transform:scaleX(0.9093);">Failed SSO</span>
<span class="t" style="left:1488.90px;top:80px;font-size:10px;color:#b7bcc6;transform:scaleX(0.9207);">Last 7 days</span>
<span class="t" style="left:822.50px;top:403px;font-size:10.0px;color:#fff;transform:scaleX(0.9297);">Last 7 days (15-Aug-2023 00:00) - (21-Aug-2023 14:39)</span>
<span class="t" style="left:62.30px;top:438px;font-size:10.0px;color:#fff;transform:scaleX(0.9247);">Top 10 URI Requests</span>
<span class="t" style="left:481.60px;top:438px;font-size:10px;color:#b7bcc6;transform:scaleX(0.9759);">Last hour</span>
<span class="t" style="left:569.20px;top:436px;font-size:10.0px;color:#fff;transform:scaleX(0.9546);">Top 10 Client IP&#x27;s</span>
<span class="t" style="left:988.50px;top:436px;font-size:10px;color:#b7bcc6;transform:scaleX(0.9712);">Last hour</span>
<span class="t" style="left:1074.60px;top:441px;font-size:10.0px;color:#fff;transform:scaleX(0.9781);">Active Blocked List</span>
<span class="t" style="left:1494.60px;top:440px;font-size:10px;color:#b7bcc6;transform:scaleX(0.9831);">Last hour</span>
<span class="t" style="left:62.00px;top:703px;font-size:10.0px;color:#fff;transform:scaleX(0.9372);">Last hour (21-Aug-2023 13:39) - (21-Aug-2023 14:39)</span>
<span class="t" style="left:569.00px;top:703px;font-size:10.0px;color:#fff;transform:scaleX(0.9372);">Last hour (21-Aug-2023 13:39) - (21-Aug-2023 14:39)</span>
<span class="t" style="left:1075.00px;top:703px;font-size:10.0px;color:#fff;transform:scaleX(0.9385);">Last hour (21-Aug-2023 13:39) - (21-Aug-2023 14:39)</span>
<span class="t" style="left:60.80px;top:466px;font-size:9.3px;color:#fff;transform:scaleX(0.8554);">URI</span>
<span class="t" style="left:322.00px;top:466px;font-size:9.3px;color:#fff;transform:scaleX(0.9267);">Requests</span>
<span class="t" style="left:63.60px;top:493px;font-size:10.0px;color:#fff;transform:scaleX(1.0434);">http://login.kemp.ax/about</span>
<span class="t" style="left:306.90px;top:493px;font-size:10.0px;color:#fff;transform:scaleX(0.9798);">80</span>
<span class="t" style="left:63.60px;top:522px;font-size:10.0px;color:#fff;transform:scaleX(1.0392);">http://login.kemp.ax/home</span>
<span class="t" style="left:306.90px;top:522px;font-size:10.0px;color:#fff;transform:scaleX(0.9798);">64</span>
<span class="t" style="left:63.60px;top:550px;font-size:10.0px;color:#fff;transform:scaleX(1.0184);">http://web1.nyc.example.com/home</span>
<span class="t" style="left:306.90px;top:550px;font-size:10.0px;color:#fff;transform:scaleX(0.9798);">36</span>
<span class="t" style="left:63.60px;top:578px;font-size:10.0px;color:#fff;transform:scaleX(1.0234);">http://web1.nyc.example.com/about</span>
<span class="t" style="left:306.90px;top:578px;font-size:10.0px;color:#fff;transform:scaleX(0.9798);">21</span>
<span class="t" style="left:63.60px;top:606px;font-size:10.0px;color:#fff;transform:scaleX(1.0383);">http://login.kemp.ax/contact</span>
<span class="t" style="left:306.90px;top:606px;font-size:10.0px;color:#fff;transform:scaleX(0.9798);">10</span>
<span class="t" style="left:63.60px;top:635px;font-size:10.0px;color:#fff;transform:scaleX(1.0269);">http://uni.progress.com/products</span>
<span class="t" style="left:306.90px;top:635px;font-size:10.0px;color:#fff;transform:scaleX(0.9798);">10</span>
<span class="t" style="left:63.60px;top:663px;font-size:10.0px;color:#fff;transform:scaleX(1.0177);">http://uni.progress.com/subscribe</span>
<span class="t" style="left:306.90px;top:663px;font-size:10.0px;color:#fff;transform:scaleX(0.9798);">9</span>
<div class="c" style="height:696px"><span class="t" style="left:63.60px;top:691px;font-size:10.0px;color:#fff;transform:scaleX(1.0174);">http://web1.nyc.example.com/contact</span></div>
<div class="c" style="height:696px"><span class="t" style="left:306.90px;top:691px;font-size:10.0px;color:#fff;transform:scaleX(0.9798);">8</span></div>
<span class="t" style="left:567.70px;top:462px;font-size:9.3px;color:#fff;transform:scaleX(1.0008);">Client</span>
<span class="t" style="left:828.90px;top:462px;font-size:9.3px;color:#fff;transform:scaleX(0.9809);">Connections</span>
<span class="t" style="left:570.50px;top:490px;font-size:10.0px;color:#fff;transform:scaleX(0.9412);">114.136.24.86</span>
<span class="t" style="left:814.20px;top:490px;font-size:10.0px;color:#fff;transform:scaleX(0.9618);">123</span>
<span class="t" style="left:570.50px;top:518px;font-size:10.0px;color:#fff;transform:scaleX(0.9332);">10.12.64.10</span>
<span class="t" style="left:814.20px;top:518px;font-size:10.0px;color:#fff;transform:scaleX(0.9618);">102</span>
<span class="t" style="left:570.50px;top:546px;font-size:10.0px;color:#fff;transform:scaleX(0.9304);">189.52.82.233</span>
<span class="t" style="left:814.20px;top:546px;font-size:10.0px;color:#fff;transform:scaleX(0.9618);">79</span>
<span class="t" style="left:570.50px;top:575px;font-size:10.0px;color:#fff;transform:scaleX(0.9332);">10.12.65.22</span>
<span class="t" style="left:814.20px;top:575px;font-size:10.0px;color:#fff;transform:scaleX(0.9618);">75</span>
<span class="t" style="left:570.50px;top:603px;font-size:10.0px;color:#fff;transform:scaleX(0.9299);">164.12.42.14</span>
<span class="t" style="left:814.20px;top:603px;font-size:10.0px;color:#fff;transform:scaleX(0.9618);">67</span>
<span class="t" style="left:570.50px;top:631px;font-size:10.0px;color:#fff;transform:scaleX(0.9304);">25.226.198.33</span>
<span class="t" style="left:814.20px;top:631px;font-size:10.0px;color:#fff;transform:scaleX(0.9618);">59</span>
<span class="t" style="left:570.50px;top:659px;font-size:10.0px;color:#fff;transform:scaleX(0.9299);">207.20.98.66</span>
<span class="t" style="left:814.20px;top:659px;font-size:10.0px;color:#fff;transform:scaleX(0.9618);">56</span>
<div class="c" style="height:696px"><span class="t" style="left:570.50px;top:687px;font-size:10.0px;color:#fff;transform:scaleX(0.9278);">212.210.107.35</span></div>
<div class="c" style="height:696px"><span class="t" style="left:814.20px;top:687px;font-size:10.0px;color:#fff;transform:scaleX(0.9618);">24</span></div>
<span class="t" style="left:1073.90px;top:471px;font-size:9.3px;color:#fff;transform:scaleX(0.9216);">User</span>
<span class="t" style="left:1198.40px;top:471px;font-size:9.3px;color:#fff;transform:scaleX(1.0017);">Domain</span>
<span class="t" style="left:1324.00px;top:471px;font-size:9.3px;color:#fff;transform:scaleX(0.9936);">Time blocked</span>
<span class="t" style="left:1448.60px;top:471px;font-size:9.3px;color:#fff;transform:scaleX(0.8578);">VS IP</span>
<span class="t" style="left:1076.90px;top:499px;font-size:10.0px;color:#fff;transform:scaleX(0.9960);">John</span>
<span class="t" style="left:1201.50px;top:499px;font-size:10.0px;color:#fff;transform:scaleX(0.9967);">login.kemp.ax</span>
<span class="t" style="left:1326.60px;top:499px;font-size:10.0px;color:#fff;transform:scaleX(0.9296);">08-Aug-2023 07:27</span>
<span class="t" style="left:1451.70px;top:499px;font-size:10.0px;color:#fff;transform:scaleX(0.9246);">12.45.67.8</span>
<span class="t" style="left:1076.90px;top:527px;font-size:10.0px;color:#fff;transform:scaleX(0.9543);">Paul</span>
<span class="t" style="left:1201.50px;top:527px;font-size:10.0px;color:#fff;transform:scaleX(0.9882);">uni.progress.com</span>
<span class="t" style="left:1326.60px;top:527px;font-size:10.0px;color:#fff;transform:scaleX(0.9296);">16-Aug-2023 09:51</span>
<span class="t" style="left:1451.70px;top:527px;font-size:10.0px;color:#fff;transform:scaleX(0.9246);">12.68.49.8</span>
<span class="t" style="left:1076.90px;top:555px;font-size:10.0px;color:#fff;transform:scaleX(0.9525);">Ringo</span>
<span class="t" style="left:1201.50px;top:555px;font-size:10.0px;color:#fff;transform:scaleX(0.9967);">login.kemp.ax</span>
<span class="t" style="left:1326.60px;top:555px;font-size:10.0px;color:#fff;transform:scaleX(0.9296);">17-Aug-2023 17:03</span>
<span class="t" style="left:1451.70px;top:555px;font-size:10.0px;color:#fff;transform:scaleX(0.9246);">12.45.67.8</span>
<span class="t" style="left:1076.90px;top:584px;font-size:10.0px;color:#fff;transform:scaleX(0.9323);">George</span>
<span class="t" style="left:1201.50px;top:584px;font-size:10.0px;color:#fff;transform:scaleX(0.9828);">web1.nyc.example.com</span>
<span class="t" style="left:1326.60px;top:584px;font-size:10.0px;color:#fff;transform:scaleX(0.9296);">21-Aug-2023 00:15</span>
<span class="t" style="left:1451.70px;top:584px;font-size:10.0px;color:#fff;transform:scaleX(0.9294);">12.32.69.58</span>
<span class="t" style="left:1549.60px;top:655px;font-size:32.5px;color:#fff;font-weight:700;-webkit-text-stroke:0;transform:scaleX(0.8560);">?</span>
<span class="t" style="left:111.30px;top:139px;font-size:9.8px;color:#e4e4e4;transform:scaleX(1.0184);">Monday</span>
<span class="t" style="left:112.30px;top:176px;font-size:9.8px;color:#e4e4e4;transform:scaleX(0.9270);">Tuesday</span>
<span class="t" style="left:96.90px;top:212px;font-size:9.8px;color:#e4e4e4;transform:scaleX(0.9678);">Wednesday</span>
<span class="t" style="left:107.50px;top:249px;font-size:9.8px;color:#e4e4e4;transform:scaleX(0.9622);">Thursday</span>
<span class="t" style="left:120.90px;top:286px;font-size:9.8px;color:#e4e4e4;transform:scaleX(0.9510);">Friday</span>
<span class="t" style="left:108.80px;top:322px;font-size:9.8px;color:#e4e4e4;transform:scaleX(0.9689);">Saturday</span>
<span class="t" style="left:160.36px;top:350px;font-size:9.5px;color:#e4e4e4;transform:scaleX(0.9643);">24</span>
<span class="t" style="left:188.63px;top:350px;font-size:9.5px;color:#e4e4e4;transform:scaleX(0.9628);">1</span>
<span class="t" style="left:214.35px;top:350px;font-size:9.5px;color:#e4e4e4;transform:scaleX(0.9628);">2</span>
<span class="t" style="left:240.07px;top:350px;font-size:9.5px;color:#e4e4e4;transform:scaleX(0.9628);">3</span>
<span class="t" style="left:265.79px;top:350px;font-size:9.5px;color:#e4e4e4;transform:scaleX(0.9628);">4</span>
<span class="t" style="left:291.51px;top:350px;font-size:9.5px;color:#e4e4e4;transform:scaleX(0.9628);">5</span>
<span class="t" style="left:317.23px;top:350px;font-size:9.5px;color:#e4e4e4;transform:scaleX(0.9628);">6</span>
<span class="t" style="left:342.95px;top:350px;font-size:9.5px;color:#e4e4e4;transform:scaleX(0.9628);">7</span>
<span class="t" style="left:368.67px;top:350px;font-size:9.5px;color:#e4e4e4;transform:scaleX(0.9628);">8</span>
<span class="t" style="left:394.39px;top:350px;font-size:9.5px;color:#e4e4e4;transform:scaleX(0.9628);">9</span>
<span class="t" style="left:417.56px;top:350px;font-size:9.5px;color:#e4e4e4;transform:scaleX(0.9643);">10</span>
<span class="t" style="left:443.28px;top:350px;font-size:9.5px;color:#e4e4e4;transform:scaleX(1.0329);">11</span>
<span class="t" style="left:469.00px;top:350px;font-size:9.5px;color:#e4e4e4;transform:scaleX(0.9643);">12</span>
<span class="t" style="left:494.72px;top:350px;font-size:9.5px;color:#e4e4e4;transform:scaleX(0.9643);">13</span>
<span class="t" style="left:520.44px;top:350px;font-size:9.5px;color:#e4e4e4;transform:scaleX(0.9643);">14</span>
<span class="t" style="left:546.16px;top:350px;font-size:9.5px;color:#e4e4e4;transform:scaleX(0.9643);">15</span>
<span class="t" style="left:571.88px;top:350px;font-size:9.5px;color:#e4e4e4;transform:scaleX(0.9643);">16</span>
<span class="t" style="left:597.60px;top:350px;font-size:9.5px;color:#e4e4e4;transform:scaleX(0.9643);">17</span>
<span class="t" style="left:623.32px;top:350px;font-size:9.5px;color:#e4e4e4;transform:scaleX(0.9643);">18</span>
<span class="t" style="left:649.04px;top:350px;font-size:9.5px;color:#e4e4e4;transform:scaleX(0.9643);">19</span>
<span class="t" style="left:674.76px;top:350px;font-size:9.5px;color:#e4e4e4;transform:scaleX(0.9643);">20</span>
<span class="t" style="left:700.48px;top:350px;font-size:9.5px;color:#e4e4e4;transform:scaleX(0.9643);">21</span>
<span class="t" style="left:726.20px;top:350px;font-size:9.5px;color:#e4e4e4;transform:scaleX(0.9643);">22</span>
<span class="t" style="left:751.92px;top:350px;font-size:9.5px;color:#e4e4e4;transform:scaleX(0.9643);">23</span>
<span class="t" style="left:370.00px;top:369px;font-size:9.5px;color:#e4e4e4;transform:scaleX(0.9440);">5</span>
<span class="t" style="left:469.80px;top:369px;font-size:9.5px;color:#e4e4e4;transform:scaleX(0.9584);">862</span>
<span class="t" style="left:334.50px;top:387px;font-size:9.8px;color:#e4e4e4;transform:scaleX(1.0005);">Min (5)</span>
<span class="t" style="left:485.20px;top:387px;font-size:9.8px;color:#e4e4e4;transform:scaleX(0.9703);">Max (862)</span>
<span class="t" style="left:895.10px;top:317px;font-size:9.6px;color:#e4e4e4;-webkit-text-stroke:0.45px;transform:scaleX(0.9918);">0</span>
<span class="t" style="left:895.10px;top:284px;font-size:9.6px;color:#e4e4e4;-webkit-text-stroke:0.45px;transform:scaleX(0.9918);">5</span>
<span class="t" style="left:889.80px;top:251px;font-size:9.6px;color:#e4e4e4;-webkit-text-stroke:0.45px;transform:scaleX(0.9933);">10</span>
<span class="t" style="left:889.80px;top:218px;font-size:9.6px;color:#e4e4e4;-webkit-text-stroke:0.45px;transform:scaleX(0.9933);">15</span>
<span class="t" style="left:889.80px;top:185px;font-size:9.6px;color:#e4e4e4;-webkit-text-stroke:0.45px;transform:scaleX(0.9933);">20</span>
<span class="t" style="left:889.80px;top:152px;font-size:9.6px;color:#e4e4e4;-webkit-text-stroke:0.45px;transform:scaleX(0.9933);">25</span>
<span class="t" style="left:932.71px;top:328px;font-size:9.7px;color:#e4e4e4;transform:scaleX(1.0157);">Aug 15</span>
<span class="t" style="left:1016.54px;top:328px;font-size:9.7px;color:#e4e4e4;transform:scaleX(1.0157);">Aug 16</span>
<span class="t" style="left:1100.37px;top:328px;font-size:9.7px;color:#e4e4e4;transform:scaleX(1.0157);">Aug 17</span>
<span class="t" style="left:1184.20px;top:328px;font-size:9.7px;color:#e4e4e4;transform:scaleX(1.0157);">Aug 18</span>
<span class="t" style="left:1268.03px;top:328px;font-size:9.7px;color:#e4e4e4;transform:scaleX(1.0157);">Aug 19</span>
<span class="t" style="left:1351.86px;top:328px;font-size:9.7px;color:#e4e4e4;transform:scaleX(1.0157);">Aug 20</span>
<span class="t" style="left:1435.69px;top:328px;font-size:9.7px;color:#e4e4e4;transform:scaleX(1.0157);">Aug 21</span>
<span class="t" style="left:1145.70px;top:346px;font-size:9.7px;color:#e4e4e4;transform:scaleX(0.9962);">Failed Auth</span>
<span class="t" style="left:1216.60px;top:346px;font-size:9.7px;color:#e4e4e4;transform:scaleX(1.0161);">Timeout</span>
</body></html>
